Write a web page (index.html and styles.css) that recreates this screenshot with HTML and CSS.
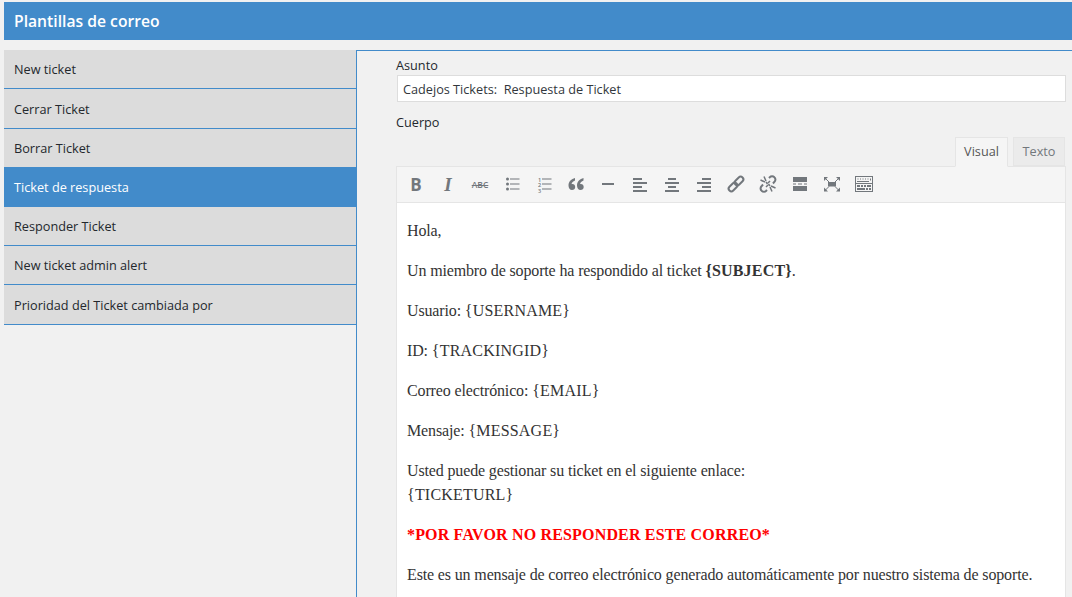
FILE: index.html
```html
<!DOCTYPE html>
<html lang="es">
<head>
    <meta charset="UTF-8">
    <title>Plantillas de correo</title>
    <link rel="stylesheet" href="styles.css">
</head>
<body>
    <h1 class="page-title">Plantillas de correo</h1>
    <div class="layout">
        <ul class="side-menu">
            <li>New ticket</li>
            <li class="tall">Cerrar Ticket</li>
            <li>Borrar Ticket</li>
            <li class="active">Ticket de respuesta</li>
            <li>Responder Ticket</li>
            <li>New ticket admin alert</li>
            <li class="tall">Prioridad del Ticket cambiada por</li>
        </ul>
        <div class="panel">
            <label class="field-label">Asunto</label>
            <input class="subject" type="text" value="Cadejos Tickets:  Respuesta de Ticket">
            <label class="field-label body-label">Cuerpo</label>
            <div class="tabs">
                <span class="tab current">Visual</span>
                <span class="tab">Texto</span>
            </div>
            <div class="editor">
                <div class="toolbar">
                    <span class="tool tool-b">B</span>
                    <span class="tool tool-i">I</span>
                    <span class="tool tool-abc">ABC</span>
                    <span class="tool">
                        <svg width="20" height="20" viewBox="0 0 20 20"><circle cx="5.500" cy="5" r="1.500"/><circle cx="5.500" cy="10" r="1.500"/><circle cx="5.500" cy="15" r="1.500"/><path d="M8 4.500h9.500v1H8zM8 9.500h9.500v1H8zM8 14.500h9.500v1H8z"/></svg>
                    </span>
                    <span class="tool">
                        <svg width="20" height="20" viewBox="0 0 20 20"><text class="num" x="5.500" y="1.500">123</text><path d="M8 4.500h9.500v1H8zM8 9.500h9.500v1H8zM8 14.500h9.500v1H8z"/></svg>
                    </span>
                    <span class="tool">
                        <svg width="20" height="20" viewBox="0 0 20 20"><path d="M9 4C5.500 4.800 2.500 7.500 2.500 11.500c0 2.700 1.400 4.500 3.500 4.500 1.900 0 3.200-1.300 3.200-3 0-1.700-1.200-2.900-2.800-2.900-.4 0-.7 0-.9.100.3-1.700 1.600-3 3.500-3.800zM17.500 4C14 4.800 11 7.500 11 11.500c0 2.700 1.400 4.500 3.500 4.500 1.900 0 3.200-1.300 3.200-3 0-1.700-1.200-2.900-2.800-2.900-.4 0-.7 0-.9.100.3-1.700 1.600-3 3.500-3.800z"/></svg>
                    </span>
                    <span class="tool">
                        <svg width="20" height="20" viewBox="0 0 20 20"><path d="M4 9h12v2H4z"/></svg>
                    </span>
                    <span class="tool">
                        <svg width="20" height="20" viewBox="0 0 20 20"><path d="M3 4h9v2H3zM3 8h14v2H3zM3 12h9v2H3zM3 16h14v2H3z"/></svg>
                    </span>
                    <span class="tool">
                        <svg width="20" height="20" viewBox="0 0 20 20"><path d="M6 4h8v2H6zM3 8h14v2H3zM6 12h8v2H6zM3 16h14v2H3z"/></svg>
                    </span>
                    <span class="tool">
                        <svg width="20" height="20" viewBox="0 0 20 20"><path d="M8 4h9v2H8zM3 8h14v2H3zM8 12h9v2H8zM3 16h14v2H3z"/></svg>
                    </span>
                    <span class="tool">
                        <svg width="20" height="20" viewBox="0 0 20 20"><g fill="none" stroke="#72777c" stroke-width="2"><rect x="10.300" y="2" width="5.400" height="10" rx="2.700" transform="rotate(45 13 7)"/><rect x="4.300" y="8" width="5.400" height="10" rx="2.700" transform="rotate(45 7 13)"/></g></svg>
                    </span>
                    <span class="tool">
                        <svg width="20" height="20" viewBox="0 0 20 20"><g fill="none" stroke="#72777c" stroke-width="2"><path d="M11 4l.8-.8a3 3 0 0 1 4.500 0 3 3 0 0 1 .2 4.500L15 9.500"/><path d="M9 16l-.8.8a3 3 0 0 1-4.500 0 3 3 0 0 1-.2-4.500L5 10.500"/></g><g fill="none" stroke="#72777c" stroke-width="1.500"><path d="M6 2.500l2 4.500M2.500 6l4.500 2M14 17.500l-2-4.500M17.500 14l-4.500-2M8 8l1.500 2M12 12l-1.500-2M12 7l-2 2M8 13l2-2"/></g></svg>
                    </span>
                    <span class="tool">
                        <svg width="20" height="20" viewBox="0 0 20 20"><path d="M3 3h14v5H3zM3 12h14v5H3zM3 9.500h3v1H3zM8 9.500h4v1H8zM14 9.500h3v1h-3z"/></svg>
                    </span>
                    <span class="tool">
                        <svg width="20" height="20" viewBox="0 0 20 20"><path d="M6 8h8v4.500H6zM2 3h4L2 7zM18 3v4l-4-4zM2 17.500v-4l4 4zM18 17.500h-4l4-4z"/><path fill="none" stroke="#72777c" d="M3 4l4 4M17 4l-4 4M3 16.500l4-4M17 16.500l-4-4"/></svg>
                    </span>
                    <span class="tool">
                        <svg width="20" height="20" viewBox="0 0 20 20"><path fill-rule="evenodd" d="M1 2h18v16H1zM2 3v6h16V3zM2 10v7h16v-7zM3.500 4.500h1v1h-1zM6 4.500h1v1H6zM8.500 4.500h1v1h-1zM11 4.500h1v1h-1zM13.500 4.500h1v1h-1zM16 4.500h1v2h-1zM3 7h12v1H3zM3 11h3v2H3zM7 11h2v2H7zM10 11h2v2h-2zM13 11h4v2h-4zM3 14h8v2H3zM12 14h2v2h-2zM15 14h2v2h-2z"/></svg>
                    </span>
                </div>
                <div class="content">
                    <p>Hola,</p>
                    <p>Un miembro de soporte ha respondido al ticket <strong class="var">{SUBJECT}</strong>.</p>
                    <p>Usuario: <span class="var">{USERNAME}</span></p>
                    <p>ID: <span class="var">{TRACKINGID}</span></p>
                    <p>Correo electrónico: <span class="var">{EMAIL}</span></p>
                    <p>Mensaje: <span class="var">{MESSAGE}</span></p>
                    <p>Usted puede gestionar su ticket en el siguiente enlace:<br><span class="var">{TICKETURL}</span></p>
                    <p class="warning">*POR FAVOR NO RESPONDER ESTE CORREO*</p>
                    <p>Este es un mensaje de correo electrónico generado automáticamente por nuestro sistema de soporte.</p>
                </div>
            </div>
        </div>
    </div>
</body>
</html>
```

FILE: styles.css
```css
html, body {
    height: 597px;
    overflow: hidden;
}
body {
    margin: 0;
    padding: 2px 0 0 4px;
    box-sizing: border-box;
    background-color: #f1f1f1;
    font-family: "Open Sans", sans-serif;
    font-size: 12.7px;
    color: #23282d;
}
.page-title {
    margin: 0;
    height: 38px;
    padding-left: 10px;
    background-color: #428bca;
    color: #fff;
    font-size: 15.7px;
    font-weight: 600;
    line-height: 38px;
}
.layout {
    display: flex;
    margin-top: 10px;
}
.side-menu {
    flex: none;
    width: 352px;
    margin: 0;
    padding: 0;
    list-style: none;
}
.side-menu li {
    height: 38px;
    padding-left: 10px;
    background-color: #dcdcdc;
    border-bottom: 1px solid #428bca;
    line-height: 38px;
}
.side-menu li.tall {
    height: 39px;
    line-height: 40px;
}
.side-menu li.active {
    background-color: #428bca;
    color: #fff;
}
.panel {
    flex: 1;
    min-width: 0;
    height: 560px;
    padding: 6px 5px 0 39px;
    border-top: 1px solid #428bca;
    border-left: 1px solid #428bca;
}
.field-label {
    display: block;
    line-height: 17px;
}
.subject {
    display: block;
    box-sizing: border-box;
    width: 669px;
    height: 27px;
    margin: 1px 0 0 1px;
    padding: 0 5px;
    border: 1px solid #ddd;
    background-color: #fff;
    font-family: inherit;
    font-size: 12.7px;
    color: #32373c;
}
.body-label {
    margin-top: 12px;
}
.tabs {
    display: flex;
    justify-content: flex-end;
    gap: 5px;
    height: 29px;
    margin-top: 6px;
    padding-right: 2px;
}
.tab {
    box-sizing: border-box;
    width: 52px;
    height: 29px;
    border: 1px solid #e5e5e5;
    background-color: #ebebeb;
    color: #72777c;
    line-height: 27px;
    text-align: center;
}
.tab.current {
    width: 53px;
    height: 30px;
    border-bottom-color: #f5f5f5;
    background-color: #f5f5f5;
    color: #555;
    position: relative;
}
.editor {
    width: 670px;
    border: 1px solid #e5e5e5;
    border-width: 1px 1px 0;
    box-sizing: border-box;
}
.toolbar {
    display: flex;
    align-items: center;
    height: 35px;
    padding-left: 3px;
    background-color: #f5f5f5;
    border-bottom: 1px solid #e5e5e5;
}
.tool {
    display: flex;
    justify-content: center;
    align-items: center;
    width: 32px;
    height: 35px;
    color: #72777c;
}
.tool svg {
    margin-bottom: 1px;
    fill: #72777c;
}
.tool .num {
    font-family: "Open Sans", sans-serif;
    font-size: 5.500px;
    font-weight: 600;
    writing-mode: vertical-rl;
    text-orientation: upright;
    letter-spacing: -2.500px;
}
.tool-b {
    font-size: 17px;
    font-weight: 700;
}
.tool-i {
    font-family: "Liberation Serif", serif;
    font-size: 19px;
    font-style: italic;
    font-weight: 700;
}
.tool-abc {
    font-size: 8.500px;
    font-weight: 600;
    text-decoration: line-through;
}
.content {
    height: 400px;
    padding: 16px 10px 0;
    background-color: #fff;
    font-family: "Liberation Serif", serif;
    font-size: 16px;
    line-height: 24px;
    color: #333;
    letter-spacing: -0.14px;
}
.content p {
    margin: 0 0 16px;
}
.content .var {
    letter-spacing: 0.2px;
}
.content .warning {
    color: #f00;
    font-weight: 700;
    letter-spacing: 0.17px;
}
```
